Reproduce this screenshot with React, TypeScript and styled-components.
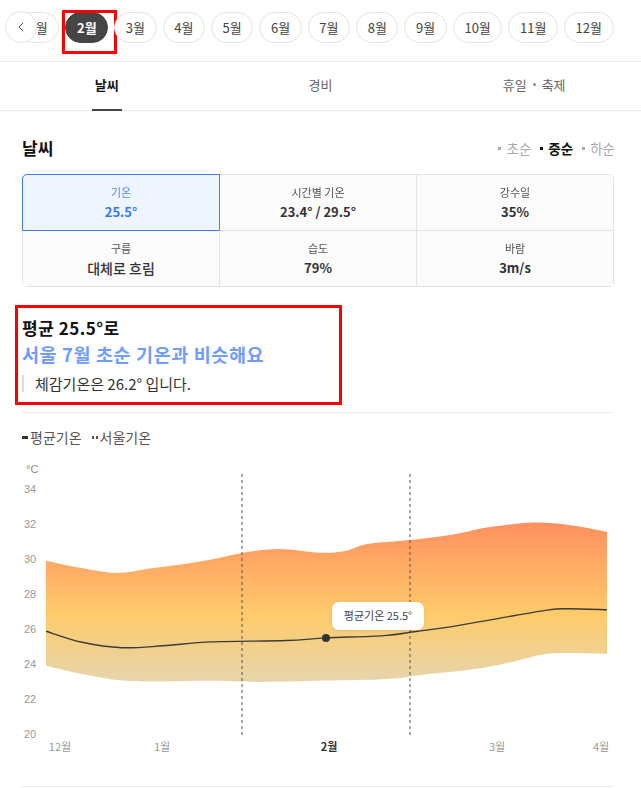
import React from 'react';
import styled, { createGlobalStyle } from 'styled-components';
import { ChevronLeft } from 'lucide-react';

const GlobalStyle = createGlobalStyle`
  * { box-sizing: border-box; }
  body {
    margin: 0;
    background: #fff;
    font-family: "Noto Sans CJK KR", "Noto Sans", sans-serif;
    color: #222;
  }
`;

const Page = styled.div`
  width: 641px;
  background: #fff;
`;

const MonthBar = styled.div`
  position: relative;
  height: 62px;
  padding-top: 12px;
  border-bottom: 1px solid #ececec;
  overflow: hidden;
`;
const MonthStrip = styled.div`
  display: flex;
  gap: 6px;
  margin-left: 17px;
`;
const Chip = styled.div<{ $active?: boolean }>`
  position: relative;
  flex: none;
  height: 31px;
  padding: 0 10.6px;
  border-radius: 16px;
  border: 1px solid ${p => (p.$active ? '#454545' : '#e4e4e4')};
  background: ${p => (p.$active ? '#454545' : '#fff')};
  color: ${p => (p.$active ? '#fff' : '#444')};
  font-size: 13px;
  font-weight: ${p => (p.$active ? 700 : 400)};
  display: flex;
  align-items: center;
`;
const Mark = styled.span`
  position: absolute;
  left: -4px;
  right: -10px;
  top: -3px;
  bottom: -12px;
  border: 3px solid #f00;
  pointer-events: none;
`;
const PrevButton = styled.button`
  position: absolute;
  left: 5px;
  top: 11px;
  width: 32px;
  height: 32px;
  border-radius: 50%;
  border: 1px solid #e4e4e4;
  background: #fff;
  color: #555;
  padding: 0;
  display: flex;
  align-items: center;
  justify-content: center;
`;

const Tabs = styled.div`
  display: grid;
  grid-template-columns: repeat(3, 1fr);
  height: 49px;
  border-bottom: 1px solid #ececec;
`;
const Tab = styled.div<{ $active?: boolean }>`
  position: relative;
  display: flex;
  align-items: center;
  justify-content: center;
  gap: 6px;
  padding-bottom: 3px;
  font-size: 13px;
  color: ${p => (p.$active ? '#111' : '#666')};
  font-weight: ${p => (p.$active ? 700 : 400)};
  &::after {
    content: '';
    display: ${p => (p.$active ? 'block' : 'none')};
    position: absolute;
    bottom: -1px;
    left: 50%;
    width: 30px;
    height: 2px;
    margin-left: -15px;
    background: #444;
  }
`;
const TabDot = styled.span`
  width: 3px;
  height: 3px;
  border-radius: 50%;
  background: #888;
`;

const Content = styled.div`
  padding: 25px 27px 0 22px;
`;
const SectionHead = styled.div`
  display: flex;
  justify-content: space-between;
  align-items: center;
  height: 24px;
`;
const SectionTitle = styled.h2`
  margin: 0;
  font-size: 17px;
  line-height: 24px;
  font-weight: 700;
  color: #111;
`;
const Periods = styled.div`
  display: flex;
  gap: 9px;
  margin-right: -1px;
`;
const Period = styled.span<{ $active?: boolean }>`
  display: flex;
  align-items: center;
  gap: 5px;
  font-size: 13.5px;
  color: ${p => (p.$active ? '#111' : '#aaa')};
  font-weight: ${p => (p.$active ? 700 : 400)};
  &::before {
    content: '';
    width: 3px;
    height: 3px;
    background: ${p => (p.$active ? '#111' : '#aaa')};
  }
`;

const InfoGrid = styled.div`
  margin-top: 14px;
  display: grid;
  grid-template-columns: repeat(3, 1fr);
  grid-template-rows: 55px 55px;
  gap: 1px;
  background: #e3e3e3;
  border: 1px solid #e3e3e3;
  border-radius: 5px;
`;
const Cell = styled.div<{ $active?: boolean }>`
  position: relative;
  z-index: ${p => (p.$active ? 1 : 0)};
  display: flex;
  flex-direction: column;
  align-items: center;
  justify-content: center;
  gap: 2px;
  background: ${p => (p.$active ? '#eef5ff' : '#fbfbfb')};
  outline: ${p => (p.$active ? '1px solid #3d80f6' : 'none')};
  border-radius: ${p => (p.$active ? '4px 0 0 0' : '0')};
  color: ${p => (p.$active ? '#3477f5' : '#333')};
`;
const CellLabel = styled.span`
  font-size: 11px;
  line-height: 16px;
  opacity: 0.85;
`;
const CellValue = styled.span<{ $large?: boolean }>`
  font-size: ${p => (p.$large ? '14px' : '13px')};
  line-height: 20px;
  font-weight: ${p => (p.$large ? 500 : 600)};
`;

const Summary = styled.div`
  width: 313px;
  margin-top: 25px;
  padding: 4px 0 5px;
  outline: 3px solid #f00;
  outline-offset: 4px;
`;
const SummaryTitle = styled.div`
  font-size: 17px;
  line-height: 24px;
  letter-spacing: 0.5px;
  font-weight: 700;
  color: #111;
`;
const SummaryHighlight = styled.div`
  font-size: 18.5px;
  line-height: 28px;
  letter-spacing: 0.6px;
  font-weight: 700;
  color: #6f9dfb;
`;
const Quote = styled.div`
  margin-top: 7px;
  padding-left: 11px;
  border-left: 2px solid #ddd;
  font-size: 15px;
  line-height: 17px;
  margin-bottom: 1px;
  color: #333;
`;

const Divider = styled.hr`
  margin: 14px 0 0;
  border: 0;
  border-top: 1px solid #ececec;
`;
const Legend = styled.div`
  display: flex;
  gap: 10px;
  margin-top: 15px;
  font-size: 14px;
  line-height: 18px;
  color: #555;
`;
const LegendItem = styled.span`
  display: flex;
  align-items: center;
  gap: 2px;
`;
const SolidKey = styled.span`
  width: 6px;
  height: 3px;
  background: #333;
`;
const DottedKey = styled.span`
  width: 6px;
  height: 3px;
  background: linear-gradient(90deg, #555 0 2px, transparent 2px 4px, #555 4px 6px);
`;
const Chart = styled.svg`
  display: block;
  margin-top: 11px;
`;
const BottomLine = styled.div`
  margin-top: 27px;
  border-top: 1px solid #ececec;
`;

const months = ['1월', '2월', '3월', '4월', '5월', '6월', '7월', '8월', '9월', '10월', '11월', '12월'];

const cells = [
  { label: '기온', value: '25.5°', active: true },
  { label: '시간별 기온', value: '23.4° / 29.5°' },
  { label: '강수일', value: '35%' },
  { label: '구름', value: '대체로 흐림', large: true },
  { label: '습도', value: '79%' },
  { label: '바람', value: '3m/s' },
];

const yOf = (v: number) => 735 - (v - 20) * 17.5;

const topBand: [number, number][] = [
  [46, 29.9], [80, 29.5], [117, 29.2], [150, 29.45], [200, 29.85], [242, 30.35], [280, 30.57],
  [320, 30.36], [345, 30.45], [367, 30.85], [410, 31.08], [453, 31.4], [487, 31.8],
  [533, 32.08], [567, 31.96], [607, 31.56],
];
const bottomBand: [number, number][] = [
  [46, 23.9], [82, 23.43], [131, 23.02], [212, 23.04], [261, 22.97], [327, 23.05],
  [388, 23.14], [429, 23.42], [482, 23.77], [514, 24.15], [543, 24.55], [571, 24.62], [607, 24.57],
];
const avgLine: [number, number][] = [
  [46, 25.87], [82, 25.24], [122, 24.93], [163, 25.04], [212, 25.26], [286, 25.34],
  [326, 25.49], [384, 25.62], [416, 25.86], [450, 26.12], [500, 26.62], [547, 27.08],
  [567, 27.16], [607, 27.1],
];

// catmull-rom -> cubic bezier through the points
const smooth = (pts: [number, number][], move = true) => {
  const p = pts.map(([x, v]) => [x, yOf(v)]);
  let d = move ? `M${p[0][0]},${p[0][1]}` : `L${p[0][0]},${p[0][1]}`;
  for (let i = 0; i < p.length - 1; i++) {
    const p0 = p[i - 1] || p[i];
    const p1 = p[i];
    const p2 = p[i + 1];
    const p3 = p[i + 2] || p2;
    const c1x = p1[0] + (p2[0] - p0[0]) / 6;
    const c1y = p1[1] + (p2[1] - p0[1]) / 6;
    const c2x = p2[0] - (p3[0] - p1[0]) / 6;
    const c2y = p2[1] - (p3[1] - p1[1]) / 6;
    d += ` C${c1x.toFixed(1)},${c1y.toFixed(1)} ${c2x.toFixed(1)},${c2y.toFixed(1)} ${p2[0]},${p2[1].toFixed(1)}`;
  }
  return d;
};

const bandPath = smooth(topBand) + ' ' + smooth([...bottomBand].reverse(), false) + ' Z';
const avgPath = smooth(avgLine);

const yTicks = [34, 32, 30, 28, 26, 24, 22, 20];
const xTicks = [
  { x: 60, label: '12월' },
  { x: 162, label: '1월' },
  { x: 329, label: '2월', bold: true },
  { x: 497, label: '3월' },
  { x: 601, label: '4월' },
];

const App = () => (
  <Page>
    <GlobalStyle />
    <MonthBar>
      <MonthStrip>
        {months.map(m => (
          <Chip key={m} $active={m === '2월'}>
            {m}
            {m === '2월' ? <Mark /> : null}
          </Chip>
        ))}
      </MonthStrip>
      <PrevButton aria-label='이전'>
        <ChevronLeft size={16} strokeWidth={1.5} />
      </PrevButton>
    </MonthBar>

    <Tabs>
      <Tab $active>날씨</Tab>
      <Tab>경비</Tab>
      <Tab>
        휴일 <TabDot /> 축제
      </Tab>
    </Tabs>

    <Content>
      <SectionHead>
        <SectionTitle>날씨</SectionTitle>
        <Periods>
          <Period>초순</Period>
          <Period $active>중순</Period>
          <Period>하순</Period>
        </Periods>
      </SectionHead>

      <InfoGrid>
        {cells.map(c => (
          <Cell key={c.label} $active={c.active}>
            <CellLabel>{c.label}</CellLabel>
            <CellValue $large={c.large}>{c.value}</CellValue>
          </Cell>
        ))}
      </InfoGrid>

      <Summary>
        <SummaryTitle>평균 25.5°로</SummaryTitle>
        <SummaryHighlight>서울 7월 초순 기온과 비슷해요</SummaryHighlight>
        <Quote>체감기온은 26.2° 입니다.</Quote>
      </Summary>

      <Divider />

      <Legend>
        <LegendItem>
          <SolidKey />
          평균기온
        </LegendItem>
        <LegendItem>
          <DottedKey />
          서울기온
        </LegendItem>
      </Legend>

      <Chart width={592} height={302} viewBox='22 458 592 302'>
        <defs>
          <linearGradient id='band' x1='0' y1='520' x2='0' y2='686' gradientUnits='userSpaceOnUse'>
            <stop offset='0' stopColor='#ff8d5f' />
            <stop offset='0.58' stopColor='#fecb6b' />
            <stop offset='1' stopColor='#e5d6b0' />
          </linearGradient>
          <filter id='tipShadow' x='-20%' y='-40%' width='140%' height='180%'>
            <feDropShadow dx='0' dy='1' stdDeviation='1.5' floodColor='#000' floodOpacity='0.08' />
          </filter>
        </defs>
        <text x={26} y={474} fontSize={11} fill='#888' fontFamily='Liberation Sans, sans-serif'>
          °C
        </text>
        {yTicks.map(t => (
          <text key={t} x={24} y={yOf(t) + 4} fontSize={11} fill='#999' fontFamily='Liberation Sans, sans-serif'>
            {t}
          </text>
        ))}
        <path d={bandPath} fill='url(#band)' />
        <line x1={242} y1={475} x2={242} y2={737} stroke='#555' strokeWidth={1} strokeDasharray='3 3' />
        <line x1={410} y1={475} x2={410} y2={737} stroke='#555' strokeWidth={1} strokeDasharray='3 3' />
        <path d={avgPath} fill='none' stroke='#3b3b3b' strokeWidth={1.4} />
        <circle cx={326} cy={yOf(25.49)} r={4} fill='#333' />
        <rect x={332} y={603} width={92} height={28} rx={7} fill='#fff' filter='url(#tipShadow)' />
        <text x={378} y={621} fontSize={11} fill='#444' textAnchor='middle' fontFamily='Noto Sans CJK KR, sans-serif'>
          평균기온 25.5°
        </text>
        {xTicks.map(t => (
          <text
            key={t.label}
            x={t.x}
            y={752}
            fontSize={11}
            textAnchor='middle'
            fill={t.bold ? '#333' : '#999'}
            fontWeight={t.bold ? 700 : 400}
            fontFamily='Noto Sans CJK KR, sans-serif'
          >
            {t.label}
          </text>
        ))}
      </Chart>

      <BottomLine />
    </Content>
  </Page>
);

export default App;
